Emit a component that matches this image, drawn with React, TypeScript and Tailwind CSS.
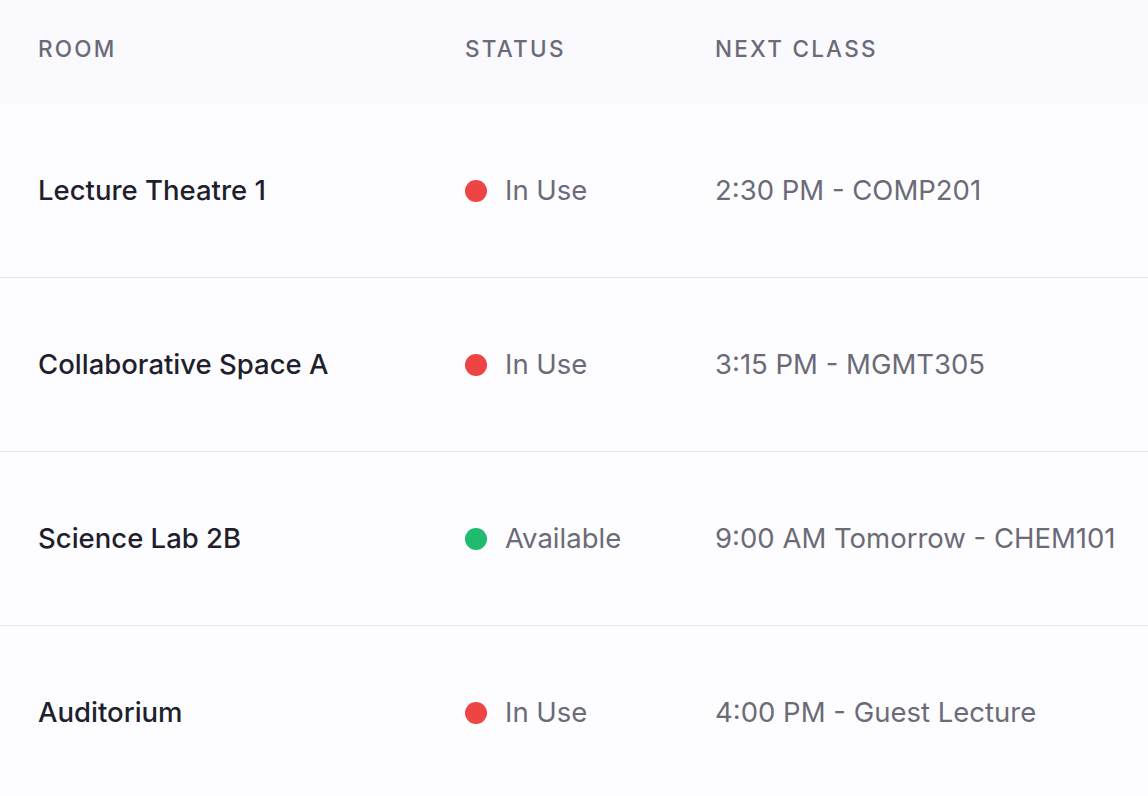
export default function App() {
  const rows = [
    { room: "Lecture Theatre 1", status: "In Use", next: "2:30 PM - COMP201" },
    { room: "Collaborative Space A", status: "In Use", next: "3:15 PM - MGMT305" },
    { room: "Science Lab 2B", status: "Available", next: "9:00 AM Tomorrow - CHEM101" },
    { room: "Auditorium", status: "In Use", next: "4:00 PM - Guest Lecture" },
  ];
  return (
    <div className="w-[1148px] h-[796px] overflow-hidden bg-[#fdfdff]" style={{ fontFamily: "Inter, 'Noto Sans', sans-serif" }}>
      <div className="h-[104px] bg-[#f9f9fe] flex items-center pb-[7px] text-[22.5px] font-medium tracking-[0.1em] text-[#6b6b78]">
        <div className="w-[465px] pl-[38px]">ROOM</div>
        <div className="w-[250px]">STATUS</div>
        <div>NEXT CLASS</div>
      </div>
      {rows.map((r, i) => (
        <div key={i} className={`h-[174px] flex items-center text-[27.5px] ${i < 3 ? "border-b border-[#e4e4e9]" : ""}`}>
          <div className="w-[465px] pl-[38px] font-medium text-[#1f1f2e]">{r.room}</div>
          <div className="w-[250px] flex items-center gap-[18px] text-[#6b6b78]">
            <span className={`w-[22px] h-[22px] rounded-full ${r.status === "Available" ? "bg-[#1fbb6f]" : "bg-[#ef4444]"}`} />
            {r.status}
          </div>
          <div className="text-[#6b6b78] whitespace-nowrap">{r.next}</div>
        </div>
      ))}
    </div>
  );
}
